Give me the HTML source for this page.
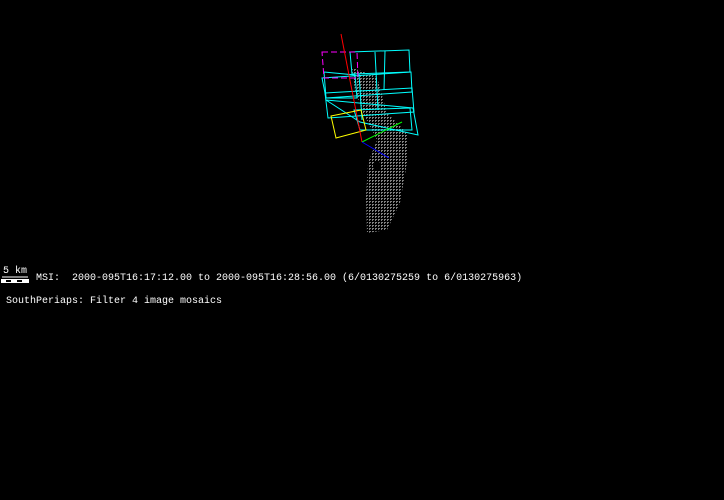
<!DOCTYPE html>
<html><head><style>
html,body{margin:0;padding:0;background:#000;width:724px;height:500px;overflow:hidden}
svg{position:absolute;left:0;top:0}
.t{position:absolute;color:#fff;font-family:"Liberation Mono",monospace;font-size:10px;line-height:12px;white-space:pre}
</style></head><body>
<svg width="724" height="500" viewBox="0 0 724 500">
<defs>
<pattern id="m" width="3" height="3" patternUnits="userSpaceOnUse">
<rect width="2" height="1" fill="#808080"/><rect width="1" height="2" fill="#808080"/>
</pattern>
</defs>
<polygon points="353,68 377,77 387,113 407,133 407,163 400,203 387,230 367,233 366,197 368,163 377,140 363,113 355,90 352,70" fill="url(#m)"/>
<ellipse cx="377" cy="166" rx="4" ry="5" fill="#000"/>
<g fill="none" stroke="#0ff" stroke-width="1">
<polygon points="350,52 409,50 410,72 352,74"/>
<polygon points="322,78 411,72 412,92 326,98"/>
<polygon points="325,93 412,88 414,112 328,118"/>
<polygon points="326,100 413,108 418,135 360,122"/>
<line x1="375" y1="52" x2="378" y2="110"/>
<line x1="385" y1="51" x2="384" y2="90"/>
<line x1="359" y1="74" x2="362" y2="120"/>
<polygon points="324,72 355,75 357,98 326,98"/>
<polygon points="354,110 410,108 412,130 360,130"/>
</g>
<polygon points="322,52 357,52 358,78 324,78" fill="none" stroke="#f0f" stroke-width="1" stroke-dasharray="6,3"/>
<polygon points="331,116 361,110 366,130 336,138" fill="none" stroke="#ff0" stroke-width="1"/>
<line x1="341" y1="34" x2="362" y2="142" stroke="#f00" stroke-width="1"/>
<line x1="362" y1="142" x2="402" y2="122" stroke="#0f0" stroke-width="1"/>
<line x1="362" y1="142" x2="389" y2="158" stroke="#00f" stroke-width="1"/>
<rect x="1" y="279" width="28" height="4" fill="#fff"/>
<rect x="6" y="280" width="5" height="2" fill="#000"/><rect x="17" y="280" width="5" height="2" fill="#000"/>
<line x1="2" y1="277" x2="28" y2="277" stroke="#fff"/>
</svg>
<div class="t" style="left:3px;top:266px">5 km</div>
<div class="t" style="left:36px;top:273px">MSI:  2000-095T16:17:12.00 to 2000-095T16:28:56.00 (6/0130275259 to 6/0130275963)</div>
<div class="t" style="left:6px;top:296px">SouthPeriaps: Filter 4 image mosaics</div>
</body></html>
